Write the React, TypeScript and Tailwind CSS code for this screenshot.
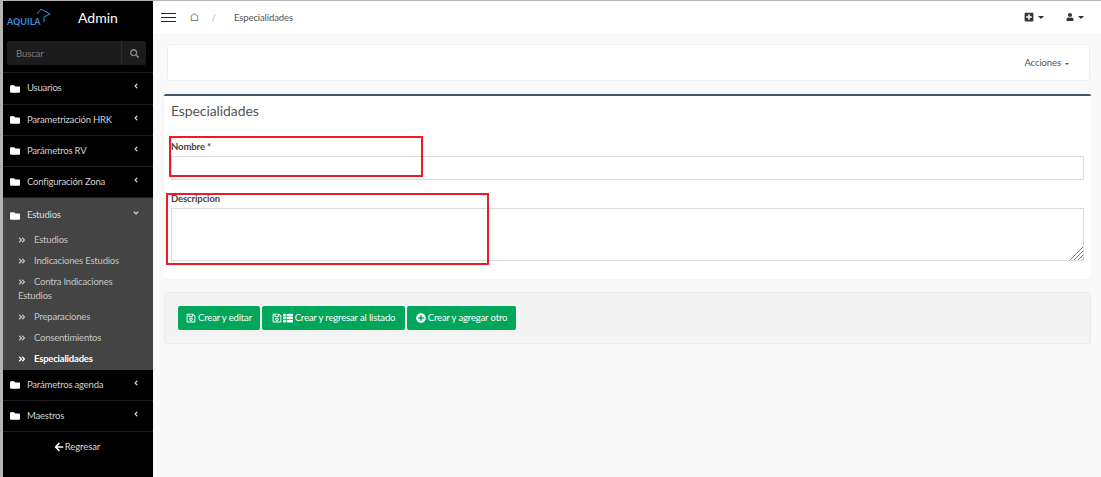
import type { ReactNode } from 'react';
import {
  FaAngleDoubleRight,
  FaAngleDown,
  FaAngleLeft,
  FaArrowLeft,
  FaFolder,
  FaPlusCircle,
  FaPlusSquare,
  FaRegSave,
  FaSearch,
  FaThList,
  FaUser,
} from 'react-icons/fa';

const SUB_ITEMS = [
  { label: 'Estudios', cls: 'h-[21px]' },
  { label: 'Indicaciones Estudios', cls: 'h-[21px]' },
  { label: 'Contra Indicaciones Estudios', cls: 'h-[35px]' },
  { label: 'Preparaciones', cls: 'h-[21px]' },
  { label: 'Consentimientos', cls: 'h-[21px]' },
  { label: 'Especialidades', cls: 'h-[21px]', active: true },
];

function MenuItem({ label, cls }: { label: string; cls: string }) {
  return (
    <div className={`flex items-center border-b border-[#1f1f1f] pl-[7px] pr-[13px] text-[#d0d0d0] ${cls}`}>
      <FaFolder className="mr-[7px] text-[10px] text-white" />
      <span className="flex-1 text-[9.5px] tracking-[-0.2px]">{label}</span>
      <FaAngleLeft className="-mt-[5px] text-[8px]" />
    </div>
  );
}

function SubItem({ label, cls, active }: { label: string; cls: string; active?: boolean }) {
  return (
    <div className={`pl-[15px] pr-[6px] text-[9.5px] leading-[14px] tracking-[-0.2px] ${cls} ${active ? 'font-bold text-white' : 'text-[#c4c4c4]'}`}>
      <FaAngleDoubleRight className="mr-[8px] mb-[1px] inline-block text-[8px]" />
      {label}
    </div>
  );
}

function GreenButton({ width, children }: { width: string; children: ReactNode }) {
  return (
    <button className={`flex h-[24px] items-center justify-center gap-[1px] rounded-[2px] bg-[#00a65a] text-[9.5px] tracking-[-0.15px] text-white ${width}`}>
      {children}
    </button>
  );
}

function Sidebar() {
  return (
    <aside className="flex h-full w-[150px] shrink-0 flex-col bg-black">
      <div className="flex h-[36px] items-center">
        <div className="relative ml-[4px] w-[42px] pt-[6px] text-[9px] font-bold text-[#3b8ed8]">
          AQUILA
          <svg className="absolute -top-[1px] left-[28px]" width="16" height="16" viewBox="0 0 16 16" fill="none" stroke="#3b8ed8" strokeWidth="1">
            <path d="M2 6 L6 1 L15 6 L9 9 L9 14" />
          </svg>
        </div>
        <span className="-mt-[3px] ml-[29px] text-[14px] text-white">Admin</span>
      </div>
      <div className="mx-[4px] mt-[4px] flex h-[24px] w-[139px] items-center rounded-[2px] bg-[#1c1c1c]">
        <span className="flex-1 pt-[2px] pl-[9px] text-[9.5px] tracking-[-0.1px] text-[#7d7d7d]">Buscar</span>
        <span className="flex h-full w-[25px] items-center justify-center border-l border-[#2b2b2b] text-[#8a8a8a]">
          <FaSearch className="text-[9px]" />
        </span>
      </div>
      <div className="mt-[7px] border-t border-[#1f1f1f]">
        <MenuItem label="Usuarios" cls="h-[32px]" />
        <MenuItem label="Parametrización HRK" cls="h-[31px]" />
        <MenuItem label="Parámetros RV" cls="h-[31px]" />
        <MenuItem label="Configuración Zona" cls="h-[31px]" />
        <div className="h-[172px] bg-[#444444] text-white">
          <div className="flex h-[35px] items-center pl-[7px] pr-[13px] text-[#dcdcdc]">
            <FaFolder className="mr-[7px] text-[10px] text-white" />
            <span className="flex-1 text-[9.5px] tracking-[-0.2px]">Estudios</span>
            <FaAngleDown className="-mt-[5px] text-[8px]" />
          </div>
          {SUB_ITEMS.map((s) => (
            <SubItem key={s.label} label={s.label} cls={s.cls} active={s.active} />
          ))}
        </div>
        <MenuItem label="Parámetros agenda" cls="h-[31px]" />
        <MenuItem label="Maestros" cls="h-[31px]" />
      </div>
      <div className="mt-[8px] flex items-center justify-center gap-[1px] pr-[2px] text-[9.5px] tracking-[-0.1px] text-[#d8d8d8]">
        <FaArrowLeft className="text-[10px] text-white" />
        Regresar
      </div>
    </aside>
  );
}

function TopBar() {
  return (
    <header className="flex h-[32px] shrink-0 items-center bg-white text-[#555]">
      <div className="ml-[8px] flex w-[15px] flex-col gap-[3px]">
        <div className="h-[1px] w-full bg-[#222]" />
        <div className="h-[1px] w-full bg-[#222]" />
        <div className="h-[1px] w-full bg-[#222]" />
      </div>
      <span className="ml-[14px] text-[11px] text-[#666]">⌂</span>
      <span className="ml-[13px] text-[10px] text-[#bbb]">/</span>
      <span className="ml-[18px] flex-1 pt-[2px] text-[9.5px] tracking-[-0.1px]">Especialidades</span>
      <FaPlusSquare className="text-[10px] text-[#333]" />
      <span className="ml-[4px] h-0 w-0 border-x-[3px] border-t-[3px] border-x-transparent border-t-[#333]" />
      <FaUser className="ml-[22px] text-[8px] text-[#333]" />
      <span className="mr-[17px] ml-[4px] h-0 w-0 border-x-[3px] border-t-[3px] border-x-transparent border-t-[#333]" />
    </header>
  );
}

export default function App() {
  return (
    <div className="h-[477px] w-[1101px] overflow-hidden bg-[#b5b5b5] pt-[1px] pl-[3px] font-['Lato',sans-serif]">
      <div className="flex h-[476px]">
        <Sidebar />
        <main className="relative flex min-w-0 flex-1 flex-col bg-[#f9f9f9]">
          <TopBar />
          <div className="mt-[11px] mr-[11px] ml-[14px] flex h-[37px] items-center justify-end rounded-[3px] border border-[#efefef] bg-white pt-[2px] pr-[20px] text-[9.5px] tracking-[-0.1px] text-[#555]">
            Acciones
            <span className="ml-[4px] h-0 w-0 border-x-[2.5px] border-t-[2.5px] border-x-transparent border-t-[#555]" />
          </div>

          <section className="mt-[13px] mr-[10px] ml-[11px] h-[185px] rounded-[2px] border-t-2 border-[#3f566e] bg-white px-[7px] shadow-[0_0_1px_#ddd]">
            <h3 className="pt-[5px] text-[14px] leading-[20px] tracking-[-0.1px] text-[#555]">Especialidades</h3>
            <label className="mt-[19px] block text-[9.5px] leading-[13px] font-bold tracking-[-0.1px] text-[#444]">Nombre *</label>
            <input className="mt-[3px] block h-[24px] w-[913px] border border-[#dcdcdc] bg-white" />
            <label className="mt-[12px] block text-[9.5px] leading-[13px] font-bold tracking-[-0.1px] text-[#444]">Descripcion</label>
            <div className="relative mt-[3px] h-[53px] w-[913px]">
              <textarea className="block h-full w-full resize-none border border-[#dcdcdc] bg-white" />
              <svg className="absolute right-[1px] bottom-[1px]" width="13" height="13" viewBox="0 0 13 13" stroke="#777" strokeWidth="1">
                <path d="M0 13 L13 0 M4 13 L13 4 M8 13 L13 8" />
              </svg>
            </div>
          </section>

          <div className="mt-[13px] mr-[10px] ml-[11px] flex h-[52px] items-center gap-[2px] rounded-[3px] border border-[#ececec] bg-[#f4f4f4] pl-[13px]">
            <GreenButton width="w-[82px]">
              <FaRegSave className="mr-[1px] text-[10px]" />
              Crear y editar
            </GreenButton>
            <GreenButton width="w-[143px]">
              <FaRegSave className="text-[10px]" />
              <FaThList className="mr-[1px] text-[10px]" />
              Crear y regresar al listado
            </GreenButton>
            <GreenButton width="w-[109px]">
              <FaPlusCircle className="mr-[1px] text-[10px]" />
              Crear y agregar otro
            </GreenButton>
          </div>

          {/* annotation rectangles painted on the screenshot */}
          <div className="pointer-events-none absolute top-[135px] left-[16px] h-[41px] w-[254px] border-2 border-[#ed1c24]" />
          <div className="pointer-events-none absolute top-[192px] left-[13px] h-[72px] w-[323px] border-2 border-[#ed1c24]" />
        </main>
      </div>
    </div>
  );
}
